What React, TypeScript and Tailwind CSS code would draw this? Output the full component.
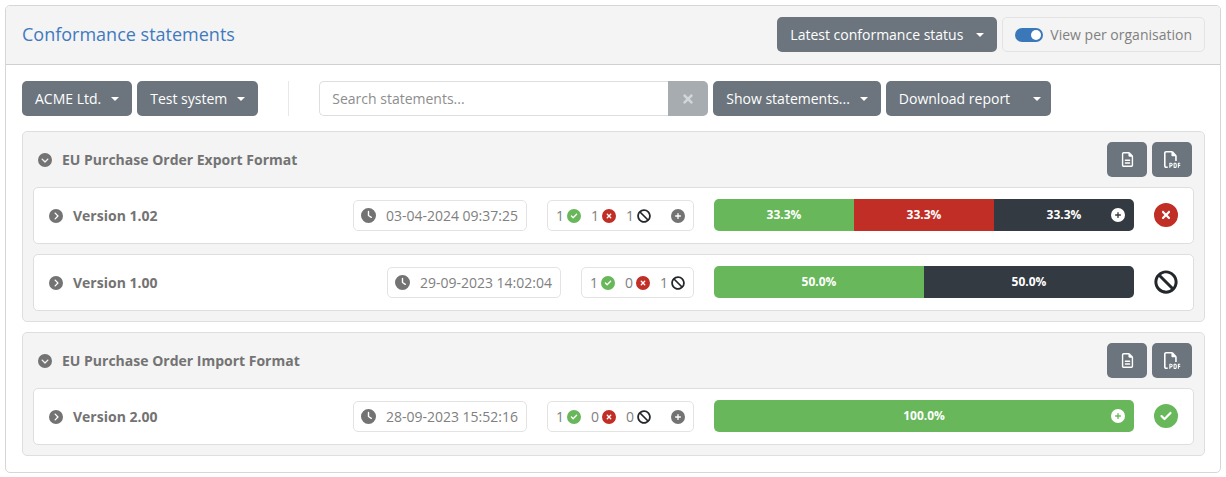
import { ReactNode } from "react";
import { FaBan, FaTimes } from "react-icons/fa";
import {
  FaCircleCheck,
  FaCircleChevronDown,
  FaCircleChevronRight,
  FaCirclePlus,
  FaCircleXmark,
  FaClock,
  FaRegFileLines,
  FaRegFilePdf,
} from "react-icons/fa6";

function Caret({ className = "ml-[9px]" }: { className?: string }) {
  return (
    <span className={`${className} inline-block w-0 h-0 border-x-[4px] border-x-transparent border-t-[4px] border-t-white`} />
  );
}

function DropButton({ label, caretClass, className = "" }: { label: string; caretClass?: string; className?: string }) {
  return (
    <button className={`h-[35px] flex items-center justify-between pl-[13px] rounded-[5px] bg-[#6c757d] text-white text-[14px] whitespace-nowrap ${className}`}>
      {label}
      <Caret className={caretClass} />
    </button>
  );
}

function IconButton({ children }: { children: ReactNode }) {
  return (
    <button className="w-10 h-[35px] flex items-center justify-center rounded-[5px] bg-[#6c757d] text-white text-[15px]">
      {children}
    </button>
  );
}

function Count({ value, icon }: { value: number; icon: ReactNode }) {
  return (
    <span className="flex items-center gap-[3px]">
      {value}
      {icon}
    </span>
  );
}

type Segment = { pct: string; width: string; color: string };

type Statement = {
  version: string;
  date: string;
  passed: number;
  failed: number;
  other: number;
  expandable: boolean;
  segments: Segment[];
  status: ReactNode;
};

function StatementRow({ s }: { s: Statement }) {
  return (
    <div className="h-[57px] flex items-center pl-[15px] bg-white border border-[#dedede] rounded-[5px]">
      <FaCircleChevronRight className="text-[#737373] text-[14px] shrink-0" />
      <span className="ml-[10px] font-bold text-[14px] text-[#737373]">{s.version}</span>
      <div className="ml-auto h-[31px] flex items-center pl-[7px] pr-[8px] border border-[#e3e3e3] rounded-[5px] text-[14px] text-[#808080] whitespace-nowrap">
        <FaClock className="text-[#737373] text-[15px] mr-[10px]" />
        {s.date}
      </div>
      <div className="ml-5 h-[31px] flex items-center px-[8px] border border-[#e3e3e3] rounded-[5px] text-[14px] text-[#808080]">
        <Count value={s.passed} icon={<FaCircleCheck className="text-[#68b75a] text-[14px]" />} />
        <span className="ml-[10px]">
          <Count value={s.failed} icon={<FaCircleXmark className="text-[#c02e26] text-[14px]" />} />
        </span>
        <span className="ml-[10px]">
          <Count value={s.other} icon={<FaBan className="text-[#23272b] text-[14px]" />} />
        </span>
        {s.expandable && <FaCirclePlus className="ml-[20px] text-[#737373] text-[14px]" />}
      </div>
      <div className="relative ml-5 mb-[1px] w-[420px] h-8 flex rounded-[5px] overflow-hidden shrink-0">
        {s.segments.map((seg) => (
          <div key={seg.color} className={`${seg.width} ${seg.color} flex items-center justify-center text-white font-bold text-[12px]`}>
            {seg.pct}
          </div>
        ))}
        {s.expandable && (
          <span className="absolute right-[9px] top-[9px] w-[14px] h-[14px] flex items-center justify-center">
            <FaCirclePlus className="text-white text-[14px]" />
          </span>
        )}
      </div>
      <div className="w-[59px] flex justify-center pl-[4px] mb-[1px] shrink-0">{s.status}</div>
    </div>
  );
}

function Group({ title, rows }: { title: string; rows: Statement[] }) {
  return (
    <div className="bg-[#f4f4f4] border border-[#dedede] rounded-[5px] px-[10px] pt-[10px] pb-[10px]">
      <div className="h-[35px] flex items-center pl-[5px] mb-[10px]">
        <FaCircleChevronDown className="text-[#737373] text-[14px]" />
        <span className="ml-[10px] font-bold text-[14px] text-[#737373]">{title}</span>
        <div className="ml-auto flex gap-[5px] mr-[2px]">
          <IconButton>
            <FaRegFileLines />
          </IconButton>
          <IconButton>
            <FaRegFilePdf className="text-[17px]" />
          </IconButton>
        </div>
      </div>
      <div className="flex flex-col gap-[10px]">
        {rows.map((r) => (
          <StatementRow key={r.version} s={r} />
        ))}
      </div>
    </div>
  );
}

const green = "bg-[#68b75a]";
const red = "bg-[#c02e26]";
const dark = "bg-[#343a41]";

const exportRows: Statement[] = [
  {
    version: "Version 1.02",
    date: "03-04-2024 09:37:25",
    passed: 1,
    failed: 1,
    other: 1,
    expandable: true,
    segments: [
      { pct: "33.3%", width: "w-1/3", color: green },
      { pct: "33.3%", width: "w-1/3", color: red },
      { pct: "33.3%", width: "w-1/3", color: dark },
    ],
    status: <FaCircleXmark className="text-[#c02e26] text-[24px]" />,
  },
  {
    version: "Version 1.00",
    date: "29-09-2023 14:02:04",
    passed: 1,
    failed: 0,
    other: 1,
    expandable: false,
    segments: [
      { pct: "50.0%", width: "w-1/2", color: green },
      { pct: "50.0%", width: "w-1/2", color: dark },
    ],
    status: <FaBan className="text-[#23272b] text-[24px]" />,
  },
];

const importRows: Statement[] = [
  {
    version: "Version 2.00",
    date: "28-09-2023 15:52:16",
    passed: 1,
    failed: 0,
    other: 0,
    expandable: true,
    segments: [{ pct: "100.0%", width: "w-full", color: green }],
    status: <FaCircleCheck className="text-[#68b75a] text-[24px]" />,
  },
];

export default function App() {
  return (
    <div className="w-[1226px] h-[477px] bg-white p-[5px] font-['Open_Sans',sans-serif] overflow-hidden">
      <div className="h-[468px] border border-[#d6d6d6] rounded-[5px] overflow-hidden">
        <div className="h-[59px] pt-[11px] pl-4 pr-[15px] bg-[#f4f4f4] border-b border-[#d0d0d0]">
          <div className="h-[35px] flex items-center">
            <h1 className="text-[18px] leading-[34px] pb-[1px] text-[#3f7abf]">Conformance statements</h1>
            <div className="ml-auto flex items-center gap-[5px]">
              <DropButton label="Latest conformance status" caretClass="ml-[13px] mr-[13px]" />
              <div className="h-[35px] flex items-center pl-[12px] pr-[12px] border border-[#e3e3e3] rounded-[5px] text-[14px] text-[#808080] whitespace-nowrap">
                <span className="relative w-[28px] h-[14px] rounded-full bg-[#3a78b9] mr-[7px]">
                  <span className="absolute right-[2px] top-[2px] w-[10px] h-[10px] rounded-full bg-white" />
                </span>
                View per organisation
              </div>
            </div>
          </div>
        </div>
        <div className="pl-4 pr-[15px] pt-4">
          <div className="flex items-center h-[35px]">
            <DropButton label="ACME Ltd." caretClass="ml-[10px] mr-[13px]" />
            <DropButton label="Test system" caretClass="ml-[10px] mr-[13px]" className="ml-[5px]" />
            <div className="w-px h-[35px] bg-[#e8e8e8] mx-[30px]" />
            <div className="flex h-[35px] w-[389px]">
              <div className="flex-1 flex items-center px-[12px] border border-[#dedede] border-r-0 rounded-l-[5px] text-[14px] text-[#8d8d8d]">
                Search statements...
              </div>
              <div className="w-10 flex items-center justify-center bg-[#a7acb1] rounded-r-[5px] text-[#d3d6d9] text-[14px]">
                <FaTimes />
              </div>
            </div>
            <DropButton label="Show statements..." caretClass="ml-[10px] mr-[13px]" className="ml-[5px]" />
            <DropButton label="Download report" caretClass="ml-[23px] mr-[10px]" className="ml-[5px]" />
          </div>
          <div className="mt-[15px] flex flex-col gap-[10px]">
            <Group title="EU Purchase Order Export Format" rows={exportRows} />
            <Group title="EU Purchase Order Import Format" rows={importRows} />
          </div>
        </div>
      </div>
    </div>
  );
}
